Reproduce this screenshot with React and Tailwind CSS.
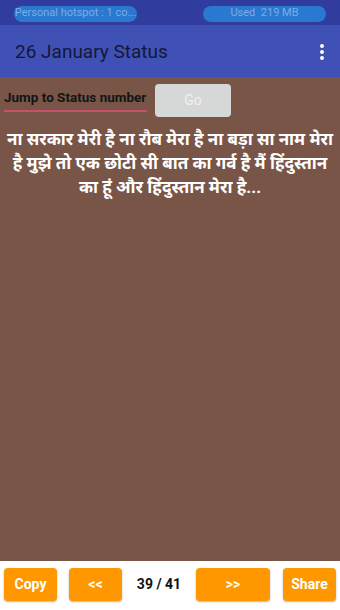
import React from 'react';

const status =
  'ना सरकार मेरी है ना रौब मेरा है ना बड़ा सा नाम मेरा है मुझे तो एक छोटी सी बात का गर्व है मैं हिंदुस्तान का हूं और हिंदुस्तान मेरा है...';

function OrangeButton({ label, className }) {
  return (
    <button
      className={`h-[33px] rounded-sm bg-[#ff9800] text-[14px] font-bold text-white shadow-[0_1px_2px_rgba(0,0,0,0.3)] ${className}`}
    >
      {label}
    </button>
  );
}

export default function App() {
  return (
    <div
      className="flex h-[610px] w-[340px] flex-col overflow-hidden bg-white"
      style={{ fontFamily: 'Roboto, "Noto Sans", "Noto Sans Devanagari", sans-serif' }}
    >
      {/* Status bar */}
      <div className="flex h-[25px] items-center justify-between bg-[#303c9e] px-[14px] pt-[2px]">
        <div className="flex h-[16px] w-[123px] items-center justify-center rounded-full bg-[#2a78d0] text-[11px] text-[#78aee8]">
          Personal hotspot : 1 co...
        </div>
        <div className="flex h-[16px] w-[123px] items-center justify-center rounded-full bg-[#2a78d0] text-[11px] text-[#78aee8]">
          Used&nbsp; 219 MB
        </div>
      </div>

      {/* App bar */}
      <div className="flex h-[52px] items-center justify-between bg-[#3f51b5] pl-[15px] pr-[14px] pt-[2px]">
        <span className="text-[19px] text-[#15173a]">26 January Status</span>
        <div className="flex flex-col items-center gap-[2px] pr-[2px]">
          <span className="h-[4px] w-[4px] rounded-full bg-white" />
          <span className="h-[4px] w-[4px] rounded-full bg-white" />
          <span className="h-[4px] w-[4px] rounded-full bg-white" />
        </div>
      </div>

      {/* Content */}
      <div className="flex flex-1 flex-col bg-[#795548]">
        <div className="flex items-start gap-[8px] pl-[4px] pt-[7px]">
          <div className="mt-[3px] w-[143px] border-b-2 border-[#c8506a] pb-[3px] text-[13.5px] font-bold leading-[20px] text-[#141414]">
            Jump to Status number
          </div>
          <button className="h-[33px] w-[76px] rounded-sm bg-[#d6d7d7] text-[14px] text-[#f0f0f0]">
            Go
          </button>
        </div>
        <p className="px-[4px] pt-[10px] text-center text-[17px] font-bold leading-[24px] text-white">
          {status}
        </p>
      </div>

      {/* Bottom bar */}
      <div className="flex h-[49px] items-center px-[4px] pb-[2px]">
        <OrangeButton label="Copy" className="w-[53px]" />
        <OrangeButton label="<<" className="ml-[12px] w-[53px]" />
        <span className="w-[74px] text-center text-[14px] font-bold text-[#111]">39 / 41</span>
        <OrangeButton label=">>" className="w-[74px]" />
        <OrangeButton label="Share" className="ml-[13px] w-[53px]" />
      </div>
    </div>
  );
}
